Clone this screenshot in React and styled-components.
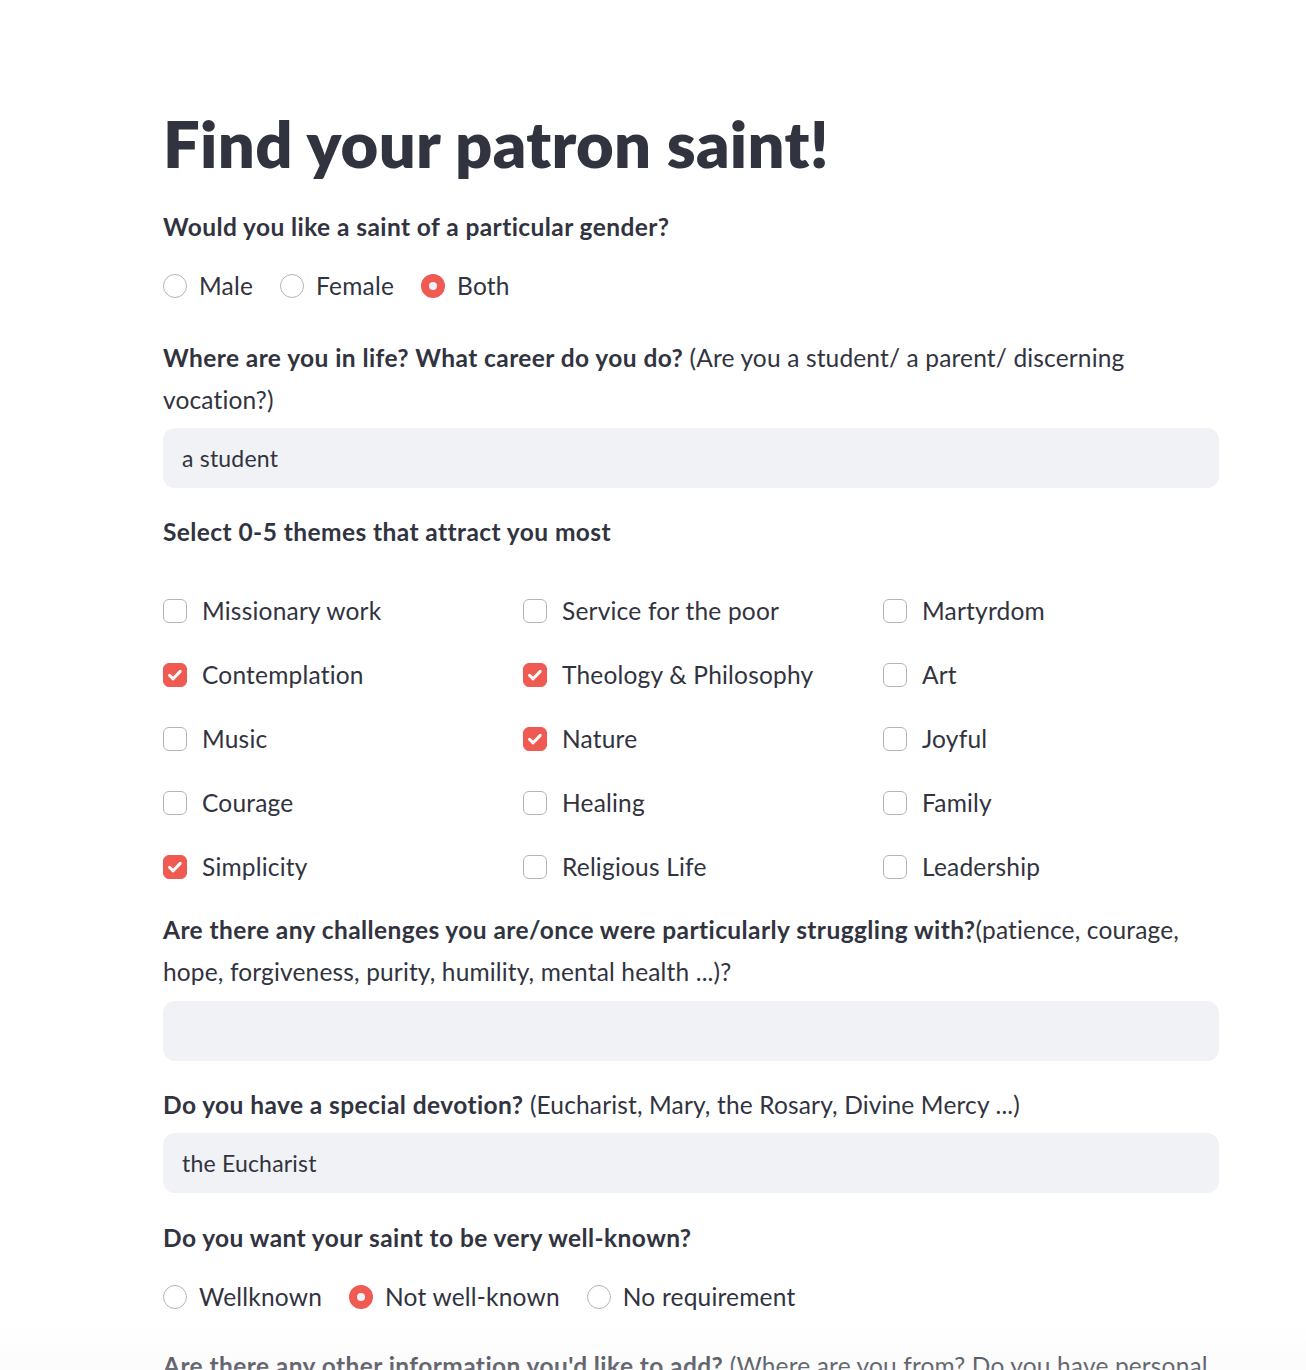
import React, { useState } from 'react';
import styled, { createGlobalStyle } from 'styled-components';

const GlobalStyle = createGlobalStyle`
	html, body {
		margin: 0;
		padding: 0;
		background: #ffffff;
	}
	body {
		font-family: Lato, "Noto Sans", "Liberation Sans", sans-serif;
		color: #31333f;
		-webkit-font-smoothing: antialiased;
	}
`;

const RED = '#ef5a52';

const THEMES = [
	['Missionary work', 'Service for the poor', 'Martyrdom'],
	['Contemplation', 'Theology & Philosophy', 'Art'],
	['Music', 'Nature', 'Joyful'],
	['Courage', 'Healing', 'Family'],
	['Simplicity', 'Religious Life', 'Leadership'],
].flat();

const RadioGroup = ({ options, value, onChange }) => (
	<RadioRow>
		{options.map((opt) => (
			<RadioOption key={opt} onClick={() => onChange(opt)}>
				<RadioDot $checked={value === opt} />
				<OptionText>{opt}</OptionText>
			</RadioOption>
		))}
	</RadioRow>
);

const Checkbox = ({ label, checked, onToggle }) => (
	<CheckOption onClick={onToggle}>
		<CheckBox $checked={checked}>
			{checked && (
				<svg width="18" height="18" viewBox="0 0 18 18">
					<path
						d="M3.6 9.4 L7.2 12.8 L14.2 5.4"
						fill="none"
						stroke="#ffffff"
						strokeWidth="3"
						strokeLinecap="round"
						strokeLinejoin="round"
					/>
				</svg>
			)}
		</CheckBox>
		<OptionText>{label}</OptionText>
	</CheckOption>
);

const App = () => {
	const [gender, setGender] = useState('Both');
	const [known, setKnown] = useState('Not well-known');
	const [career, setCareer] = useState('a student');
	const [challenges, setChallenges] = useState('');
	const [devotion, setDevotion] = useState('the Eucharist');
	const [themes, setThemes] = useState([
		'Contemplation',
		'Theology & Philosophy',
		'Nature',
		'Simplicity',
	]);

	const toggleTheme = (t) => {
		setThemes((prev) =>
			prev.includes(t) ? prev.filter((x) => x !== t) : [...prev, t]
		);
	};

	return (
		<>
			<GlobalStyle />
			<Page>
				<Title>Find your patron saint!</Title>

				<Label $gap={24}>
					<b>Would you like a saint of a particular gender?</b>
				</Label>
				<Field $gap={23}>
					<RadioGroup
						options={['Male', 'Female', 'Both']}
						value={gender}
						onChange={setGender}
					/>
				</Field>

				<Label $gap={36}>
					<b>Where are you in life? What career do you do?</b> (Are you a
					student/ a parent/ discerning
					<br />
					vocation?)
				</Label>
				<Input
					$gap={7}
					value={career}
					onChange={(e) => setCareer(e.target.value)}
				/>

				<Label $gap={23}>
					<b>Select 0-5 themes that attract you most</b>
				</Label>
				<ThemeGrid>
					{THEMES.map((t) => (
						<Checkbox
							key={t}
							label={t}
							checked={themes.includes(t)}
							onToggle={() => toggleTheme(t)}
						/>
					))}
				</ThemeGrid>

				<Label $gap={22}>
					<b>Are there any challenges you are/once were particularly struggling with?</b>
					(patience, courage,
					<br />
					hope, forgiveness, purity, humility, mental health ...)?
				</Label>
				<Input
					$gap={8}
					value={challenges}
					onChange={(e) => setChallenges(e.target.value)}
				/>

				<Label $gap={23}>
					<b>Do you have a special devotion?</b> (Eucharist, Mary, the Rosary,
					Divine Mercy ...)
				</Label>
				<Input
					$gap={7}
					value={devotion}
					onChange={(e) => setDevotion(e.target.value)}
				/>

				<Label $gap={24}>
					<b>Do you want your saint to be very well-known?</b>
				</Label>
				<Field $gap={23}>
					<RadioGroup
						options={['Wellknown', 'Not well-known', 'No requirement']}
						value={known}
						onChange={setKnown}
					/>
				</Field>

				<Label $gap={33}>
					<b>Are there any other information you'd like to add?</b> (Where are
					you from? Do you have personal
					<br />
					devotions to particular places or saints?)
				</Label>
			</Page>
			<BottomFade />
		</>
	);
};

// CSS // CSS // CSS // CSS // CSS // CSS // CSS // CSS // CSS // CSS // CSS
const Page = styled.main`
	width: 1056px;
	margin: 0 0 0 163px;
	padding: 104px 0 80px;
	display: flex;
	flex-direction: column;
`;

const Title = styled.h1`
	margin: 0;
	font-size: 65px;
	line-height: 78px;
	font-weight: 800;
	letter-spacing: 0.3px;
	color: #31333f;
`;

const Label = styled.div`
	margin-top: ${(p) => p.$gap}px;
	font-size: 24.5px;
	line-height: 42px;
	letter-spacing: 0.15px;
	color: #31333f;

	b {
		font-weight: 700;
		letter-spacing: 0.42px;
	}
`;

const Field = styled.div`
	margin-top: ${(p) => p.$gap}px;
`;

const Input = styled.input`
	margin-top: ${(p) => p.$gap}px;
	box-sizing: border-box;
	width: 100%;
	height: 60px;
	padding: 0 19px;
	border: none;
	border-radius: 12px;
	background-color: #f0f2f6;
	font-family: inherit;
	font-size: 23px;
	letter-spacing: 0.2px;
	color: #31333f;
	outline: none;
`;

const RadioRow = styled.div`
	display: flex;
	align-items: center;
	gap: 27px;
	height: 30px;
`;

const RadioOption = styled.label`
	display: flex;
	align-items: center;
	gap: 12px;
	cursor: pointer;
`;

const RadioDot = styled.span`
	box-sizing: border-box;
	width: 24px;
	height: 24px;
	border-radius: 50%;
	flex-shrink: 0;
	background-color: ${(p) => (p.$checked ? '#f0f2f6' : '#ffffff')};
	border: ${(p) => (p.$checked ? `8px solid ${RED}` : '1px solid #b4b4b8')};
`;

const OptionText = styled.span`
	font-size: 24.5px;
	line-height: 30px;
	letter-spacing: 0.2px;
	color: #31333f;
	white-space: nowrap;
`;

const ThemeGrid = styled.div`
	margin-top: 38px;
	display: grid;
	grid-template-columns: repeat(3, 336px);
	column-gap: 24px;
	row-gap: 24px;
`;

const CheckOption = styled.label`
	display: flex;
	align-items: center;
	gap: 15px;
	height: 40px;
	cursor: pointer;
`;

const CheckBox = styled.span`
	box-sizing: border-box;
	width: 24px;
	height: 24px;
	border-radius: 6px;
	flex-shrink: 0;
	display: flex;
	justify-content: center;
	align-items: center;
	background-color: ${(p) => (p.$checked ? RED : '#ffffff')};
	border: 1px solid ${(p) => (p.$checked ? RED : '#b4b4b8')};
`;

const BottomFade = styled.div`
	position: fixed;
	left: 0;
	right: 0;
	bottom: 0;
	height: 50px;
	pointer-events: none;
	background: linear-gradient(
		to bottom,
		rgba(255, 255, 255, 0) 0%,
		rgba(244, 244, 244, 0.3) 100%
	);
`;

export default App;
